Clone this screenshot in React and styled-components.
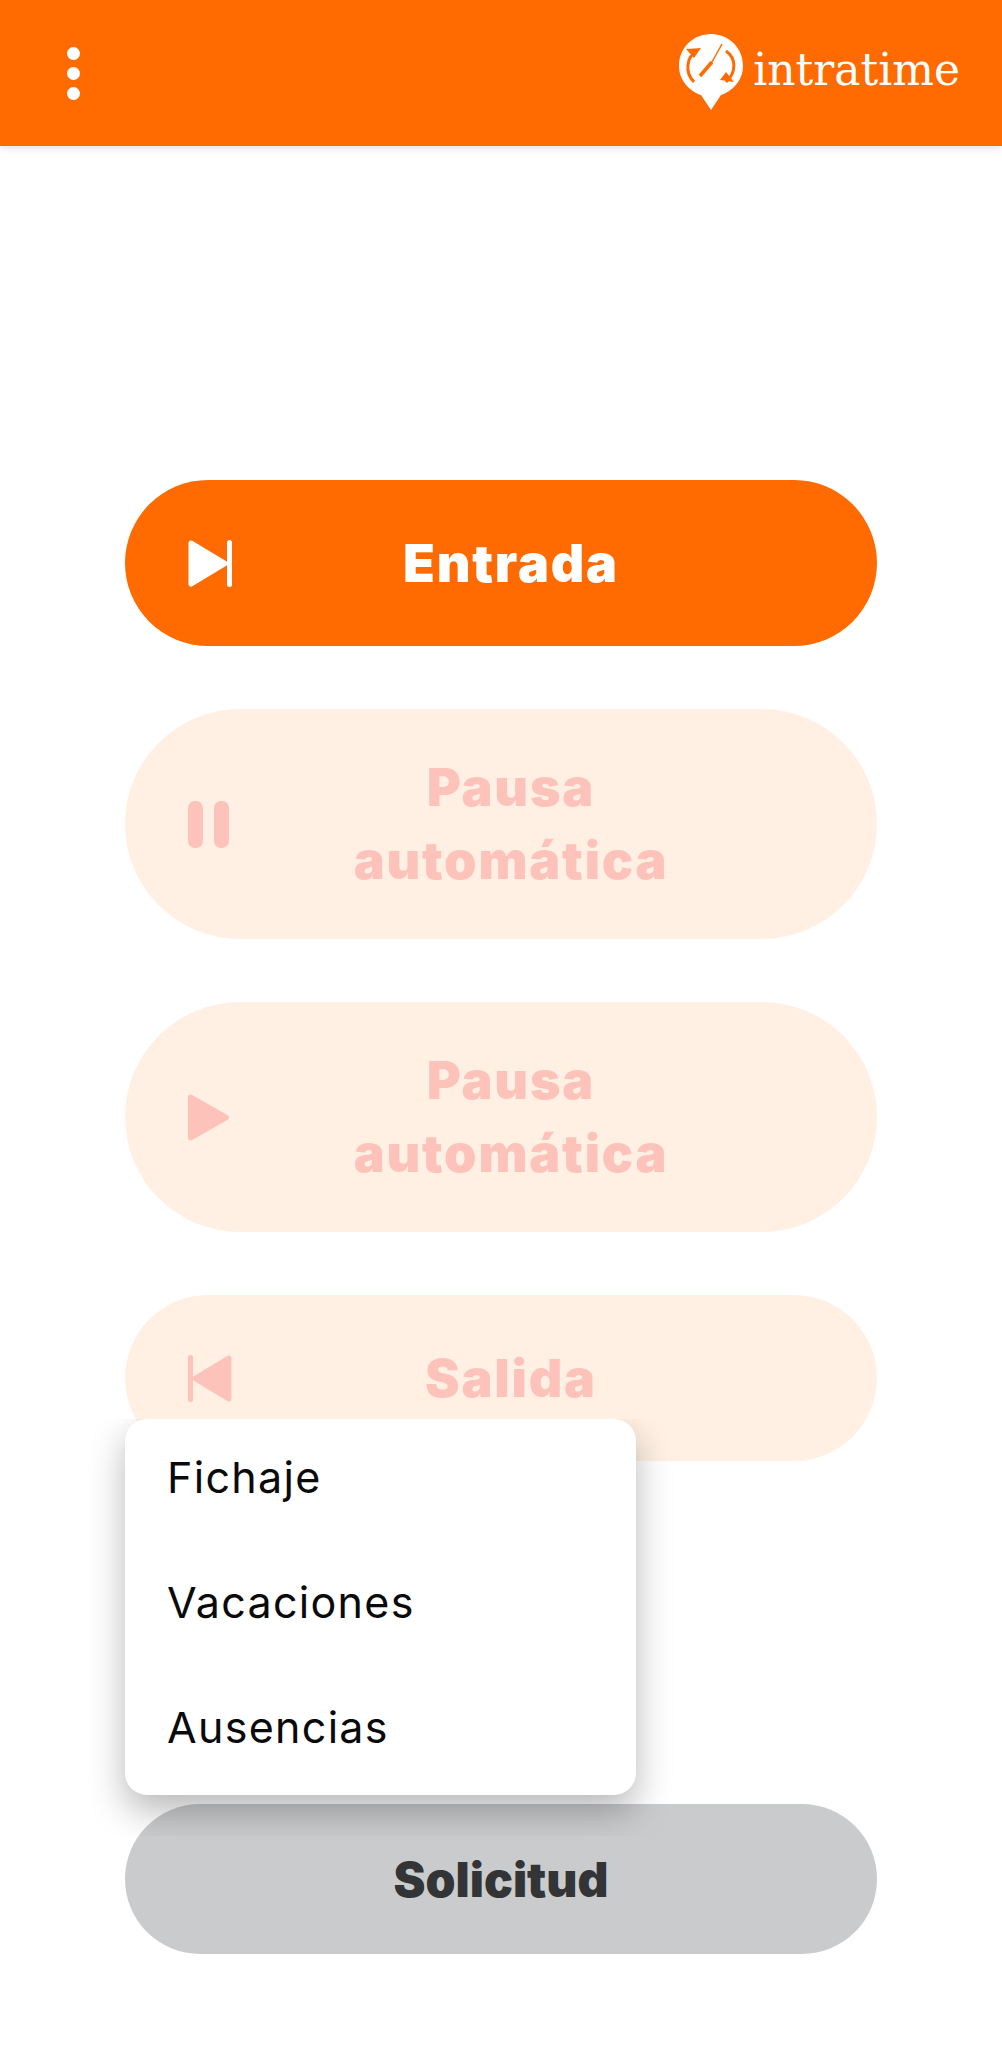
import React from 'react';
import styled, { createGlobalStyle } from 'styled-components';

const GlobalStyle = createGlobalStyle`
    html, body {
        margin: 0;
        padding: 0;
        background: #ffffff;
        font-family: "Inter", "Liberation Sans", sans-serif;
    }
`;

const Page = styled.div`
    width: 100%;
    min-height: 2048px;
    display: flex;
    flex-direction: column;
    background: #ffffff;
`;

const Header = styled.header`
    height: 146px;
    box-sizing: border-box;
    padding: 0 42px 0 67px;
    display: flex;
    align-items: center;
    justify-content: space-between;
    background: #ff6b00;
    box-shadow: 0 2px 8px rgba(0, 0, 0, 0.12);
`;

const Kebab = styled.div`
    display: flex;
    flex-direction: column;
    gap: 7px;
`;

const Dot = styled.span`
    width: 13px;
    height: 13px;
    border-radius: 50%;
    background: #ffffff;
`;

const Logo = styled.div`
    display: flex;
    align-items: center;
    gap: 10px;
    margin-top: -2px;
`;

const LogoText = styled.span`
    font-family: "DejaVu Serif", serif;
    font-size: 44px;
    line-height: 1;
    color: #ffffff;
    margin-top: -5px;
`;

const Content = styled.main`
    padding: 334px 125px 0;
    display: flex;
    flex-direction: column;
`;

const Actions = styled.div`
    display: flex;
    flex-direction: column;
    gap: 63px;
`;

const ActionButton = styled.div`
    min-height: ${(p) => (p.$tall ? '230px' : '166px')};
    box-sizing: border-box;
    padding: 0 87px 0 63px;
    display: flex;
    align-items: center;
    border-radius: ${(p) => (p.$tall ? '115px' : '83px')};
    background: ${(p) => (p.$active ? '#ff6b00' : '#fff0e3')};
    color: ${(p) => (p.$active ? '#ffffff' : '#fdc3bb')};
`;

const ActionIcon = styled.svg`
    width: 44px;
    height: 47px;
    flex: none;
    fill: currentColor;
    stroke: currentColor;
    stroke-linejoin: round;
`;

const ActionLabel = styled.span`
    flex: 1;
    text-align: center;
    font-size: 52px;
    line-height: 73px;
    font-weight: 900;
    letter-spacing: 1.8px;
`;

const RequestArea = styled.div`
    position: relative;
    margin-top: 343px;
`;

const RequestButton = styled.div`
    height: 150px;
    display: flex;
    align-items: center;
    justify-content: center;
    border-radius: 75px;
    background: #cacbcd;
    color: #333436;
    font-size: 48px;
    font-weight: 900;
`;

const Menu = styled.div`
    position: absolute;
    left: 0;
    bottom: calc(100% + 9px);
    width: 511px;
    height: 376px;
    display: flex;
    flex-direction: column;
    border-radius: 22px;
    background: #ffffff;
    box-shadow: 0 16px 36px rgba(0, 0, 0, 0.28);
    clip-path: inset(0 -40px -41px -40px);
`;

const MenuItem = styled.div`
    flex: 1;
    display: flex;
    align-items: center;
    padding: 0 0 10px 42px;
    font-size: 43px;
    letter-spacing: 1.3px;
    color: #0a0a0a;
`;

const SkipForward = () => (
    <ActionIcon viewBox="0 0 44 47">
        <path d="M3 3 L37 23.5 L3 44 Z" strokeWidth="5" />
        <rect x="39" y="0" width="5" height="47" rx="2.5" stroke="none" />
    </ActionIcon>
);

const Pause = () => (
    <ActionIcon viewBox="0 0 44 47">
        <rect x="0" y="0" width="15" height="47" rx="7" stroke="none" />
        <rect x="26" y="0" width="15" height="47" rx="7" stroke="none" />
    </ActionIcon>
);

const Play = () => (
    <ActionIcon viewBox="0 0 44 47">
        <path d="M2.5 3 L38.5 23.5 L2.5 44 Z" strokeWidth="5" />
    </ActionIcon>
);

const SkipBack = () => (
    <ActionIcon viewBox="0 0 44 47">
        <rect x="0" y="0" width="5" height="47" rx="2" stroke="none" />
        <path d="M41 3 L7 23.5 L41 44 Z" strokeWidth="5" />
    </ActionIcon>
);

const LogoMark = () => (
    <svg width="64" height="76" viewBox="0 0 64 76">
        <path
            d="M32 0 C50 0 64 14 64 32 C64 46 54 57 42 61 L32 76 L22 61 C10 57 0 46 0 32 C0 14 14 0 32 0 Z"
            fill="#ffffff"
        />
        <path d="M18 17 C8 22 5 38 15 48" fill="none" stroke="#ff6b00" strokeWidth="3" />
        <path d="M7 15 L22 14 L15 24 Z" fill="#ff6b00" />
        <path d="M47 17 C57 24 58 38 47 48" fill="none" stroke="#ff6b00" strokeWidth="3" />
        <path d="M41 46 L55 48 L47 38 Z" fill="#ff6b00" />
        <path d="M43 10 L33 28" fill="none" stroke="#ff6b00" strokeWidth="1.5" />
        <path d="M33 28 L21 42" fill="none" stroke="#ff6b00" strokeWidth="3.5" />
    </svg>
);

export default function App() {
    return (
        <Page>
            <GlobalStyle />
            <Header>
                <Kebab>
                    <Dot />
                    <Dot />
                    <Dot />
                </Kebab>
                <Logo>
                    <LogoMark />
                    <LogoText>intratime</LogoText>
                </Logo>
            </Header>
            <Content>
                <Actions>
                    <ActionButton $active>
                        <SkipForward />
                        <ActionLabel>Entrada</ActionLabel>
                    </ActionButton>
                    <ActionButton $tall>
                        <Pause />
                        <ActionLabel>Pausa<br />automática</ActionLabel>
                    </ActionButton>
                    <ActionButton $tall>
                        <Play />
                        <ActionLabel>Pausa<br />automática</ActionLabel>
                    </ActionButton>
                    <ActionButton>
                        <SkipBack />
                        <ActionLabel>Salida</ActionLabel>
                    </ActionButton>
                </Actions>
                <RequestArea>
                    <Menu>
                        <MenuItem>Fichaje</MenuItem>
                        <MenuItem>Vacaciones</MenuItem>
                        <MenuItem>Ausencias</MenuItem>
                    </Menu>
                    <RequestButton>Solicitud</RequestButton>
                </RequestArea>
            </Content>
        </Page>
    );
}
